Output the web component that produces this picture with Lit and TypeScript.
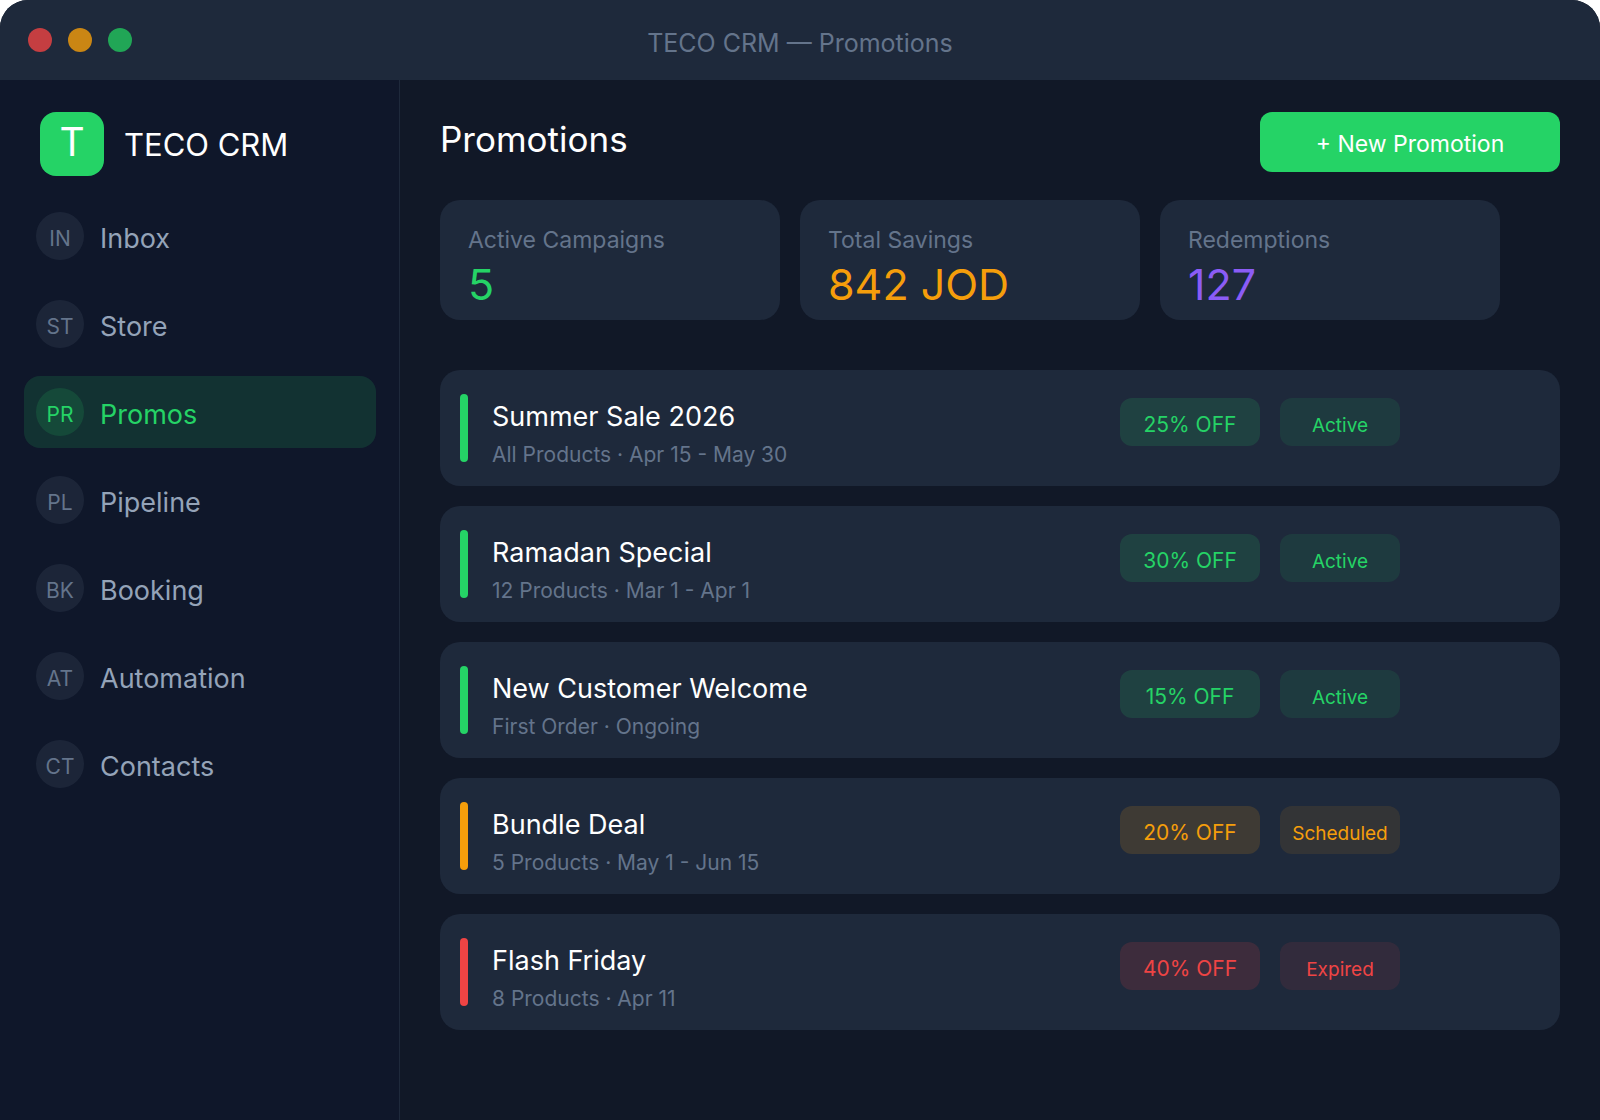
import { LitElement, html, css } from "lit";
import { customElement, property, state } from "lit/decorators.js";
import { classMap } from "lit/directives/class-map.js";

type Tone = "green" | "amber" | "red" | "violet";

interface Promotion {
  name: string;
  detail: string;
  discount: string;
  status: string;
  tone: Tone;
}

const NAV = [
  { code: "IN", label: "Inbox" },
  { code: "ST", label: "Store" },
  { code: "PR", label: "Promos" },
  { code: "PL", label: "Pipeline" },
  { code: "BK", label: "Booking" },
  { code: "AT", label: "Automation" },
  { code: "CT", label: "Contacts" },
];

const STATS: { label: string; value: string; tone: Tone }[] = [
  { label: "Active Campaigns", value: "5", tone: "green" },
  { label: "Total Savings", value: "842 JOD", tone: "amber" },
  { label: "Redemptions", value: "127", tone: "violet" },
];

const PROMOTIONS: Promotion[] = [
  { name: "Summer Sale 2026", detail: "All Products · Apr 15 - May 30", discount: "25% OFF", status: "Active", tone: "green" },
  { name: "Ramadan Special", detail: "12 Products · Mar 1 - Apr 1", discount: "30% OFF", status: "Active", tone: "green" },
  { name: "New Customer Welcome", detail: "First Order · Ongoing", discount: "15% OFF", status: "Active", tone: "green" },
  { name: "Bundle Deal", detail: "5 Products · May 1 - Jun 15", discount: "20% OFF", status: "Scheduled", tone: "amber" },
  { name: "Flash Friday", detail: "8 Products · Apr 11", discount: "40% OFF", status: "Expired", tone: "red" },
];

const tones = css`
  .green { --tone: 37 211 102; }
  .amber { --tone: 245 158 11; }
  .red { --tone: 239 68 68; }
  .violet { --tone: 139 92 246; }
`;

@customElement("side-nav")
export class SideNav extends LitElement {
  @state() private current = "PR";

  static styles = css`
    :host {
      display: block;
      box-sizing: border-box;
      padding: 32px 23px 32px 24px;
      background: #0f172a;
      border-right: 1px solid #1e293b;
    }
    .brand {
      display: flex;
      align-items: center;
      gap: 20px;
      padding-left: 16px;
      color: #ffffff;
      font-size: 31px;
    }
    .brand-name { padding-top: 2px; line-height: 60px; }
    .logo {
      width: 64px;
      height: 64px;
      box-sizing: border-box;
      border-radius: 16px;
      background: #25d366;
      font-size: 39px;
      line-height: 60px;
      text-align: center;
    }
    .items {
      display: grid;
      gap: 16px;
      margin: 24px 0 0;
      padding: 0;
      list-style: none;
    }
    .item {
      display: flex;
      align-items: center;
      gap: 16px;
      padding: 12px;
      border-radius: 16px;
      color: #94a3b8;
      font-size: 27px;
      line-height: 46px;
      text-decoration: none;
    }
    .code {
      width: 48px;
      height: 48px;
      box-sizing: border-box;
      padding-top: 4px;
      border-radius: 50%;
      background: rgb(148 163 184 / 0.1);
      color: #64748b;
      font-size: 21px;
      text-align: center;
    }
    .label { padding-top: 6px; line-height: 42px; }
    .current { background: rgb(37 211 102 / 0.15); color: #25d366; }
    .current .code { background: rgb(37 211 102 / 0.15); color: #25d366; }
  `;

  private select(event: Event, code: string) {
    event.preventDefault();
    this.current = code;
  }

  render() {
    return html`
      <div class="brand"><span class="logo" aria-hidden="true">T</span><span class="brand-name">TECO CRM</span></div>
      <nav aria-label="Main">
        <ul class="items">
          ${NAV.map(({ code, label }) => html`
            <li>
              <a
                href="#${label.toLowerCase()}"
                class=${classMap({ item: true, current: code === this.current })}
                aria-current=${code === this.current ? "page" : "false"}
                @click=${(e: Event) => this.select(e, code)}
              ><span class="code" aria-hidden="true">${code}</span><span class="label">${label}</span></a>
            </li>`)}
        </ul>
      </nav>
    `;
  }
}

@customElement("stat-card")
export class StatCard extends LitElement {
  @property() label = "";
  @property() value = "";
  @property() tone: Tone = "green";

  static styles = [tones, css`
    :host {
      display: block;
      padding: 24px 28px 8px;
      border-radius: 20px;
      background: #1e293b;
    }
    .label { color: #64748b; font-size: 23px; line-height: 32px; }
    .value { color: rgb(var(--tone)); font-size: 43px; line-height: 56px; }
  `];

  render() {
    return html`
      <div class="label">${this.label}</div>
      <div class="value ${this.tone}">${this.value}</div>
    `;
  }
}

@customElement("promo-row")
export class PromoRow extends LitElement {
  @property({ attribute: false }) promo!: Promotion;

  static styles = [tones, css`
    :host { display: block; }
    .row {
      display: flex;
      align-items: flex-start;
      gap: 20px;
      padding: 24px 160px 10px 20px;
      border-radius: 20px;
      background: #1e293b;
    }
    .bar {
      width: 8px;
      height: 68px;
      margin-right: 4px;
      border-radius: 4px;
      background: rgb(var(--tone));
    }
    .text { flex: 1; min-width: 0; padding-top: 6px; }
    .name { margin: 0; color: #ffffff; font-size: 27px; font-weight: 400; line-height: 34px; }
    .detail { margin: 0; color: #64748b; font-size: 21px; line-height: 42px; }
    .chip {
      width: 140px;
      height: 48px;
      margin-top: 4px;
      border-radius: 12px;
      background: rgb(var(--tone) / 0.15);
      color: rgb(var(--tone));
      font-size: 21px;
      line-height: 54px;
      text-align: center;
    }
    .status {
      width: 120px;
      background: rgb(var(--tone) / 0.1);
      font-size: 19px;
      line-height: 56px;
    }
  `];

  render() {
    const { name, detail, discount, status, tone } = this.promo;
    return html`
      <article class="row ${tone}">
        <span class="bar"></span>
        <div class="text">
          <h2 class="name">${name}</h2>
          <p class="detail">${detail}</p>
        </div>
        <span class="chip">${discount}</span>
        <span class="chip status">${status}</span>
      </article>
    `;
  }
}

@customElement("app-root")
export class AppRoot extends LitElement {
  static styles = css`
    :host {
      display: flex;
      flex-direction: column;
      min-height: 100vh;
      overflow: hidden;
      border-radius: 28px 28px 0 0;
      background: #111827;
      font-family: Inter, "Liberation Sans", sans-serif;
    }
    .titlebar {
      display: grid;
      grid-template-columns: 1fr auto 1fr;
      align-items: center;
      padding: 0 28px;
      background: #1e293b;
    }
    .lights { display: flex; gap: 16px; }
    .light { width: 24px; height: 24px; border-radius: 50%; opacity: 0.8; }
    .close { background: #ef4444; }
    .minimise { background: #f59e0b; }
    .zoom { background: #22c55e; }
    .title { padding-top: 6px; color: #64748b; font-size: 25px; line-height: 74px; }
    .body { flex: 1; display: grid; grid-template-columns: 400px minmax(0, 1fr); }
    .main { padding: 32px 40px; }
    .head { display: flex; justify-content: space-between; align-items: flex-start; }
    .heading { margin: 0; color: #ffffff; font-size: 35px; font-weight: 400; line-height: 54px; }
    .new {
      width: 300px;
      height: 60px;
      padding: 4px 0 0;
      border: 0;
      border-radius: 12px;
      background: #25d366;
      color: #ffffff;
      font-family: inherit;
      font-size: 23px;
      cursor: pointer;
    }
    .stats {
      display: grid;
      grid-template-columns: repeat(3, minmax(0, 1fr));
      gap: 20px;
      margin: 28px 60px 50px 0;
    }
    .list { display: grid; gap: 20px; margin: 0; padding: 0; list-style: none; }
  `;

  render() {
    return html`
      <header class="titlebar">
        <div class="lights" aria-hidden="true">
          <span class="light close"></span>
          <span class="light minimise"></span>
          <span class="light zoom"></span>
        </div>
        <div class="title">TECO CRM — Promotions</div>
      </header>
      <div class="body">
        <side-nav></side-nav>
        <main class="main">
          <div class="head">
            <h1 class="heading">Promotions</h1>
            <button class="new" type="button">+ New Promotion</button>
          </div>
          <section class="stats" aria-label="Summary">
            ${STATS.map((s) => html`<stat-card .label=${s.label} .value=${s.value} .tone=${s.tone}></stat-card>`)}
          </section>
          <ul class="list">
            ${PROMOTIONS.map((p) => html`<li><promo-row .promo=${p}></promo-row></li>`)}
          </ul>
        </main>
      </div>
    `;
  }
}
